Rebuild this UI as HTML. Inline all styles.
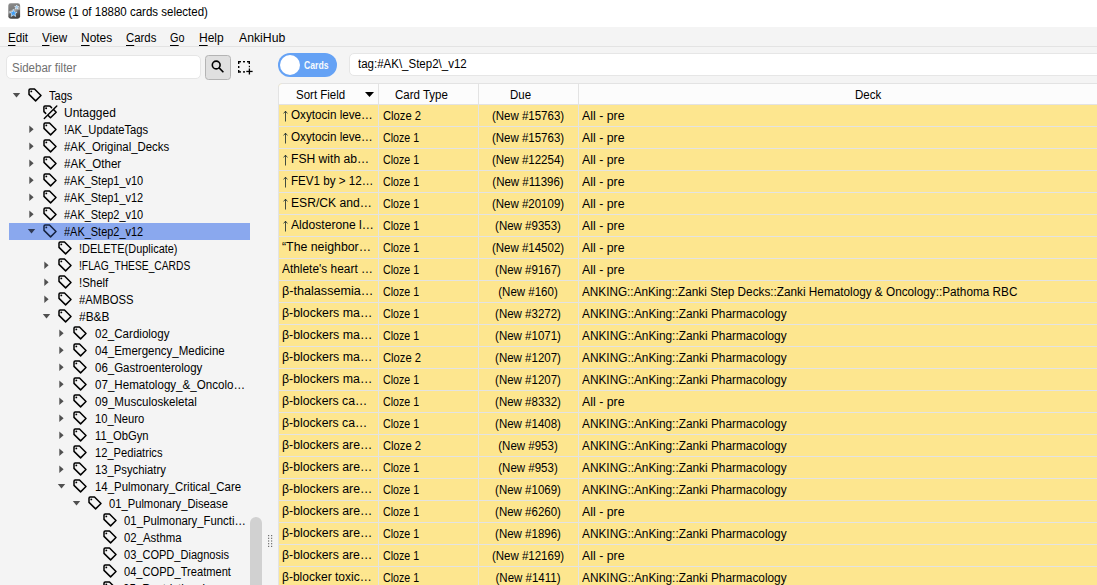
<!DOCTYPE html>
<html><head><meta charset="utf-8">
<style>
*{box-sizing:border-box;margin:0;padding:0}
html,body{width:1097px;height:585px;overflow:hidden;background:#f4f4f4;font-family:"Liberation Sans",sans-serif;font-size:12.5px;color:#000}
#title .t,#menu span,#filter span,#search span,.row span,.sr .txt,.hc{transform:scaleX(.92);transform-origin:0 50%}
.row span.c3{transform-origin:50% 50%}
.abs{position:absolute}
#title{left:0;top:0;width:1097px;height:27px;background:#fff}
#title .t{left:27px;top:4.5px;white-space:nowrap;color:#000}
#menu{left:0;top:27px;width:1097px;height:20px;background:#f4f4f4;border-bottom:1px solid #e3e3e3}
#menu span{position:absolute;top:3.8px;white-space:nowrap}
#menu u{text-decoration:none;border-bottom:1px solid #000;}
#filter{left:6px;top:55px;width:195px;height:24px;background:#fff;border:1px solid #e6e6e6;border-radius:5px}
#filter span{position:absolute;left:4.5px;top:5px;color:#707070}
#sbtn{left:205px;top:55px;width:26px;height:25px;background:#e0e0e0;border:1px solid #b4b4b4;border-radius:3.5px}
#toggle{left:278px;top:53px;width:59px;height:24px;background:#65a2f5;border-radius:12px}
#toggle .knob{left:2px;top:2px;width:20px;height:20px;background:#fff;border-radius:50%}
#toggle .lab{left:25.6px;top:7px;color:#fff;font-size:10px;font-weight:bold;transform:scaleX(.868);transform-origin:0 50%;opacity:.95}
#search{left:349px;top:53px;width:760px;height:23px;background:#fff;border:1px solid #e6e6e6;border-radius:5px}
#search span{position:absolute;left:8px;top:3.3px;white-space:nowrap}
#table{left:278px;top:83px;width:830px;height:520px;border:1px solid #e3e3e3;border-radius:4px 0 0 0;overflow:hidden;background:#fde68f}
#thead{left:0;top:0;width:830px;height:21px;background:#fcfcfc;border-bottom:1px solid #e3e3e3}
.hc{position:absolute;top:3.5px;white-space:nowrap}
.vline{position:absolute;top:0;width:1px;height:520px;background:#e3e3e3}
.row{position:absolute;left:0;width:830px;height:22px;border-bottom:1px solid #e3e3e3}
.row span{position:absolute;top:3.5px;white-space:nowrap}
.row span.c1{font-size:12px;top:2.8px}
.row svg{position:absolute;left:3px;top:5px}
.c1{left:3px}
.c1.ar{left:12px}
.c2{left:103px}
.c3{left:199px;width:100px;text-align:center}
.c4{left:304px}
#sidebar{left:0;top:87px;width:250px;height:500px}
.sr{position:absolute;left:0;width:250px;height:17px;white-space:nowrap}
.sr.sel{left:9px;width:241px;background:#8aa8ee}
.sr .txt{position:absolute;top:1.6px}
.sr svg{position:absolute;top:0px}
#scroll{left:250px;top:517px;width:12px;height:80px;background:#d1d1d1;border-radius:6px}
</style></head><body>
<div id="title" class="abs">
<svg class="abs" style="left:8px;top:3px" width="13" height="16" viewBox="0 0 13 16"><defs><linearGradient id="ig" x1="0" y1="0" x2="0.3" y2="1"><stop offset="0" stop-color="#8e8e8e"/><stop offset="0.55" stop-color="#777"/><stop offset="1" stop-color="#454545"/></linearGradient></defs><rect x="0.3" y="0.3" width="11.8" height="15.4" rx="2.4" fill="url(#ig)"/><path d="M0.3 8.5 Q6 5.5 12.1 3.2 V6.5 Q6 8 0.3 11Z" fill="#b4b4b4" opacity="0.7"/><polygon points="5.40,6.40 6.40,8.92 9.11,9.09 7.02,10.83 7.69,13.46 5.40,12.00 3.11,13.46 3.78,10.83 1.69,9.09 4.40,8.92" fill="#3f9df2" stroke="#d5eafb" stroke-width="0.7"/><polygon points="8.70,2.00 9.29,3.39 10.79,3.52 9.65,4.51 9.99,5.98 8.70,5.20 7.41,5.98 7.75,4.51 6.61,3.52 8.11,3.39" fill="#8cc6f6" stroke="#eef6fd" stroke-width="0.6"/></svg>
<span class="abs t">Browse (1 of 18880 cards selected)</span>
</div>
<div id="menu" class="abs">
<span style="left:8.30px;transform:scaleX(0.9333)"><u>E</u>dit</span>
<span style="left:42.10px;transform:scaleX(0.9331)"><u>V</u>iew</span>
<span style="left:81.00px;transform:scaleX(0.9556)"><u>N</u>otes</span>
<span style="left:126.20px;transform:scaleX(0.9115)"><u>C</u>ards</span>
<span style="left:170.40px;transform:scaleX(0.8696)"><u>G</u>o</span>
<span style="left:199.00px;transform:scaleX(0.9606)"><u>H</u>elp</span>
<span style="left:238.60px;transform:scaleX(0.9799)">AnkiHub</span>
</div>
<div id="filter" class="abs"><span>Sidebar filter</span></div>
<div id="sbtn" class="abs"><svg class="abs" style="left:5px;top:3px" width="16" height="16" viewBox="0 0 16 16"><circle cx="5.2" cy="6.0" r="3.9" fill="none" stroke="#000" stroke-width="1.6"/><line x1="8.1" y1="8.9" x2="12.4" y2="13.2" stroke="#000" stroke-width="1.6"/></svg></div>
<svg class="abs" style="left:236px;top:59px" width="18" height="18" viewBox="0 0 18 18"><g fill="#000"><rect x="2" y="2" width="3" height="1.4"/><rect x="2" y="2" width="1.4" height="3"/><rect x="7" y="2" width="2" height="1.4"/><rect x="11" y="2" width="3" height="1.4"/><rect x="12.6" y="2" width="1.4" height="3"/><rect x="2" y="7" width="1.4" height="2"/><rect x="12.8" y="6.8" width="1.2" height="1.4"/><rect x="2" y="11" width="1.4" height="2.6"/><rect x="2" y="12.2" width="3" height="1.4"/><rect x="7" y="12.2" width="2" height="1.4"/><rect x="12.75" y="9.5" width="1.3" height="6"/><rect x="10.3" y="11.8" width="6.3" height="1.3"/></g></svg>
<div id="toggle" class="abs"><div class="abs knob"></div><span class="abs lab">Cards</span></div>
<div id="search" class="abs"><span>tag:#AK\_Step2\_v12</span></div>
<div id="sidebar" class="abs">
<div class="sr" style="top:0px"><svg style="left:12px" width="9" height="17"><polygon points="0.8,6 8.2,6 4.5,10.5" fill="#505050"/></svg><svg style="left:27px" width="16" height="17" viewBox="0 0 16 17"><path d="M2 3.2 Q2 2 3.2 2 H7.5 L14 8.5 L8.6 13.9 L2 7.4 Z" fill="none" stroke="#000" stroke-width="1.5" stroke-linejoin="round"/><circle cx="4.3" cy="4.4" r="0.95" fill="#000"/></svg><span class="txt" style="left:49.20px;transform:scaleX(0.8826)">Tags</span></div>
<div class="sr" style="top:17px"><svg style="left:42px" width="16" height="17" viewBox="0 0 16 17"><path d="M3.7 9.4 L1.9 7.6 V3 Q1.9 1.9 3 1.9 H7.3 Q7.8 1.9 8.3 2.4 L9.6 3.7" fill="none" stroke="#000" stroke-width="1.5" stroke-linecap="round" stroke-linejoin="round"/><path d="M11.5 5.5 L14.2 8.3 L8.5 13.8 L5.9 11.2" fill="none" stroke="#000" stroke-width="1.5" stroke-linejoin="round"/><circle cx="4.1" cy="4.2" r="1" fill="#000"/><line x1="2.3" y1="14.5" x2="14.8" y2="2.1" stroke="#000" stroke-width="1.4" stroke-linecap="round"/></svg><span class="txt" style="left:64.40px;transform:scaleX(0.9555)">Untagged</span></div>
<div class="sr" style="top:34px"><svg style="left:27px" width="9" height="17"><polygon points="2.3,4.6 6.6,8.3 2.3,12" fill="#505050"/></svg><svg style="left:42px" width="16" height="17" viewBox="0 0 16 17"><path d="M2 3.2 Q2 2 3.2 2 H7.5 L14 8.5 L8.6 13.9 L2 7.4 Z" fill="none" stroke="#000" stroke-width="1.5" stroke-linejoin="round"/><circle cx="4.3" cy="4.4" r="0.95" fill="#000"/></svg><span class="txt" style="left:64.40px;transform:scaleX(0.8975)">!AK_UpdateTags</span></div>
<div class="sr" style="top:51px"><svg style="left:27px" width="9" height="17"><polygon points="2.3,4.6 6.6,8.3 2.3,12" fill="#505050"/></svg><svg style="left:42px" width="16" height="17" viewBox="0 0 16 17"><path d="M2 3.2 Q2 2 3.2 2 H7.5 L14 8.5 L8.6 13.9 L2 7.4 Z" fill="none" stroke="#000" stroke-width="1.5" stroke-linejoin="round"/><circle cx="4.3" cy="4.4" r="0.95" fill="#000"/></svg><span class="txt" style="left:64.40px;transform:scaleX(0.9121)">#AK_Original_Decks</span></div>
<div class="sr" style="top:68px"><svg style="left:27px" width="9" height="17"><polygon points="2.3,4.6 6.6,8.3 2.3,12" fill="#505050"/></svg><svg style="left:42px" width="16" height="17" viewBox="0 0 16 17"><path d="M2 3.2 Q2 2 3.2 2 H7.5 L14 8.5 L8.6 13.9 L2 7.4 Z" fill="none" stroke="#000" stroke-width="1.5" stroke-linejoin="round"/><circle cx="4.3" cy="4.4" r="0.95" fill="#000"/></svg><span class="txt" style="left:64.40px;transform:scaleX(0.9250)">#AK_Other</span></div>
<div class="sr" style="top:85px"><svg style="left:27px" width="9" height="17"><polygon points="2.3,4.6 6.6,8.3 2.3,12" fill="#505050"/></svg><svg style="left:42px" width="16" height="17" viewBox="0 0 16 17"><path d="M2 3.2 Q2 2 3.2 2 H7.5 L14 8.5 L8.6 13.9 L2 7.4 Z" fill="none" stroke="#000" stroke-width="1.5" stroke-linejoin="round"/><circle cx="4.3" cy="4.4" r="0.95" fill="#000"/></svg><span class="txt" style="left:64.40px;transform:scaleX(0.8766)">#AK_Step1_v10</span></div>
<div class="sr" style="top:102px"><svg style="left:27px" width="9" height="17"><polygon points="2.3,4.6 6.6,8.3 2.3,12" fill="#505050"/></svg><svg style="left:42px" width="16" height="17" viewBox="0 0 16 17"><path d="M2 3.2 Q2 2 3.2 2 H7.5 L14 8.5 L8.6 13.9 L2 7.4 Z" fill="none" stroke="#000" stroke-width="1.5" stroke-linejoin="round"/><circle cx="4.3" cy="4.4" r="0.95" fill="#000"/></svg><span class="txt" style="left:64.40px;transform:scaleX(0.8766)">#AK_Step1_v12</span></div>
<div class="sr" style="top:119px"><svg style="left:27px" width="9" height="17"><polygon points="2.3,4.6 6.6,8.3 2.3,12" fill="#505050"/></svg><svg style="left:42px" width="16" height="17" viewBox="0 0 16 17"><path d="M2 3.2 Q2 2 3.2 2 H7.5 L14 8.5 L8.6 13.9 L2 7.4 Z" fill="none" stroke="#000" stroke-width="1.5" stroke-linejoin="round"/><circle cx="4.3" cy="4.4" r="0.95" fill="#000"/></svg><span class="txt" style="left:64.40px;transform:scaleX(0.8766)">#AK_Step2_v10</span></div>
<div class="sr sel" style="top:136px"></div>
<div class="sr" style="top:136px"><svg style="left:27px" width="9" height="17"><polygon points="0.8,6 8.2,6 4.5,10.5" fill="#2f3a55"/></svg><svg style="left:42px" width="16" height="17" viewBox="0 0 16 17"><path d="M2 3.2 Q2 2 3.2 2 H7.5 L14 8.5 L8.6 13.9 L2 7.4 Z" fill="none" stroke="#15223f" stroke-width="1.5" stroke-linejoin="round"/><circle cx="4.3" cy="4.4" r="0.95" fill="#15223f"/></svg><span class="txt" style="left:64.40px;transform:scaleX(0.8766)">#AK_Step2_v12</span></div>
<div class="sr" style="top:153px"><svg style="left:57px" width="16" height="17" viewBox="0 0 16 17"><path d="M2 3.2 Q2 2 3.2 2 H7.5 L14 8.5 L8.6 13.9 L2 7.4 Z" fill="none" stroke="#000" stroke-width="1.5" stroke-linejoin="round"/><circle cx="4.3" cy="4.4" r="0.95" fill="#000"/></svg><span class="txt" style="left:79.10px;transform:scaleX(0.8753)">!DELETE(Duplicate)</span></div>
<div class="sr" style="top:170px"><svg style="left:42px" width="9" height="17"><polygon points="2.3,4.6 6.6,8.3 2.3,12" fill="#505050"/></svg><svg style="left:57px" width="16" height="17" viewBox="0 0 16 17"><path d="M2 3.2 Q2 2 3.2 2 H7.5 L14 8.5 L8.6 13.9 L2 7.4 Z" fill="none" stroke="#000" stroke-width="1.5" stroke-linejoin="round"/><circle cx="4.3" cy="4.4" r="0.95" fill="#000"/></svg><span class="txt" style="left:79.10px;transform:scaleX(0.8216)">!FLAG_THESE_CARDS</span></div>
<div class="sr" style="top:187px"><svg style="left:42px" width="9" height="17"><polygon points="2.3,4.6 6.6,8.3 2.3,12" fill="#505050"/></svg><svg style="left:57px" width="16" height="17" viewBox="0 0 16 17"><path d="M2 3.2 Q2 2 3.2 2 H7.5 L14 8.5 L8.6 13.9 L2 7.4 Z" fill="none" stroke="#000" stroke-width="1.5" stroke-linejoin="round"/><circle cx="4.3" cy="4.4" r="0.95" fill="#000"/></svg><span class="txt" style="left:79.10px;transform:scaleX(0.9160)">!Shelf</span></div>
<div class="sr" style="top:204px"><svg style="left:42px" width="9" height="17"><polygon points="2.3,4.6 6.6,8.3 2.3,12" fill="#505050"/></svg><svg style="left:57px" width="16" height="17" viewBox="0 0 16 17"><path d="M2 3.2 Q2 2 3.2 2 H7.5 L14 8.5 L8.6 13.9 L2 7.4 Z" fill="none" stroke="#000" stroke-width="1.5" stroke-linejoin="round"/><circle cx="4.3" cy="4.4" r="0.95" fill="#000"/></svg><span class="txt" style="left:79.10px;transform:scaleX(0.9018)">#AMBOSS</span></div>
<div class="sr" style="top:221px"><svg style="left:42px" width="9" height="17"><polygon points="0.8,6 8.2,6 4.5,10.5" fill="#505050"/></svg><svg style="left:57px" width="16" height="17" viewBox="0 0 16 17"><path d="M2 3.2 Q2 2 3.2 2 H7.5 L14 8.5 L8.6 13.9 L2 7.4 Z" fill="none" stroke="#000" stroke-width="1.5" stroke-linejoin="round"/><circle cx="4.3" cy="4.4" r="0.95" fill="#000"/></svg><span class="txt" style="left:79.10px;transform:scaleX(0.9542)">#B&amp;B</span></div>
<div class="sr" style="top:238px"><svg style="left:57px" width="9" height="17"><polygon points="2.3,4.6 6.6,8.3 2.3,12" fill="#505050"/></svg><svg style="left:72px" width="16" height="17" viewBox="0 0 16 17"><path d="M2 3.2 Q2 2 3.2 2 H7.5 L14 8.5 L8.6 13.9 L2 7.4 Z" fill="none" stroke="#000" stroke-width="1.5" stroke-linejoin="round"/><circle cx="4.3" cy="4.4" r="0.95" fill="#000"/></svg><span class="txt" style="left:94.60px;transform:scaleX(0.9242)">02_Cardiology</span></div>
<div class="sr" style="top:255px"><svg style="left:57px" width="9" height="17"><polygon points="2.3,4.6 6.6,8.3 2.3,12" fill="#505050"/></svg><svg style="left:72px" width="16" height="17" viewBox="0 0 16 17"><path d="M2 3.2 Q2 2 3.2 2 H7.5 L14 8.5 L8.6 13.9 L2 7.4 Z" fill="none" stroke="#000" stroke-width="1.5" stroke-linejoin="round"/><circle cx="4.3" cy="4.4" r="0.95" fill="#000"/></svg><span class="txt" style="left:94.60px;transform:scaleX(0.9195)">04_Emergency_Medicine</span></div>
<div class="sr" style="top:272px"><svg style="left:57px" width="9" height="17"><polygon points="2.3,4.6 6.6,8.3 2.3,12" fill="#505050"/></svg><svg style="left:72px" width="16" height="17" viewBox="0 0 16 17"><path d="M2 3.2 Q2 2 3.2 2 H7.5 L14 8.5 L8.6 13.9 L2 7.4 Z" fill="none" stroke="#000" stroke-width="1.5" stroke-linejoin="round"/><circle cx="4.3" cy="4.4" r="0.95" fill="#000"/></svg><span class="txt" style="left:94.60px;transform:scaleX(0.9192)">06_Gastroenterology</span></div>
<div class="sr" style="top:289px"><svg style="left:57px" width="9" height="17"><polygon points="2.3,4.6 6.6,8.3 2.3,12" fill="#505050"/></svg><svg style="left:72px" width="16" height="17" viewBox="0 0 16 17"><path d="M2 3.2 Q2 2 3.2 2 H7.5 L14 8.5 L8.6 13.9 L2 7.4 Z" fill="none" stroke="#000" stroke-width="1.5" stroke-linejoin="round"/><circle cx="4.3" cy="4.4" r="0.95" fill="#000"/></svg><span class="txt" style="left:94.60px;transform:scaleX(0.9265)">07_Hematology_&amp;_Oncolo…</span></div>
<div class="sr" style="top:306px"><svg style="left:57px" width="9" height="17"><polygon points="2.3,4.6 6.6,8.3 2.3,12" fill="#505050"/></svg><svg style="left:72px" width="16" height="17" viewBox="0 0 16 17"><path d="M2 3.2 Q2 2 3.2 2 H7.5 L14 8.5 L8.6 13.9 L2 7.4 Z" fill="none" stroke="#000" stroke-width="1.5" stroke-linejoin="round"/><circle cx="4.3" cy="4.4" r="0.95" fill="#000"/></svg><span class="txt" style="left:94.60px;transform:scaleX(0.9272)">09_Musculoskeletal</span></div>
<div class="sr" style="top:323px"><svg style="left:57px" width="9" height="17"><polygon points="2.3,4.6 6.6,8.3 2.3,12" fill="#505050"/></svg><svg style="left:72px" width="16" height="17" viewBox="0 0 16 17"><path d="M2 3.2 Q2 2 3.2 2 H7.5 L14 8.5 L8.6 13.9 L2 7.4 Z" fill="none" stroke="#000" stroke-width="1.5" stroke-linejoin="round"/><circle cx="4.3" cy="4.4" r="0.95" fill="#000"/></svg><span class="txt" style="left:94.60px;transform:scaleX(0.8980)">10_Neuro</span></div>
<div class="sr" style="top:340px"><svg style="left:57px" width="9" height="17"><polygon points="2.3,4.6 6.6,8.3 2.3,12" fill="#505050"/></svg><svg style="left:72px" width="16" height="17" viewBox="0 0 16 17"><path d="M2 3.2 Q2 2 3.2 2 H7.5 L14 8.5 L8.6 13.9 L2 7.4 Z" fill="none" stroke="#000" stroke-width="1.5" stroke-linejoin="round"/><circle cx="4.3" cy="4.4" r="0.95" fill="#000"/></svg><span class="txt" style="left:94.60px;transform:scaleX(0.8988)">11_ObGyn</span></div>
<div class="sr" style="top:357px"><svg style="left:57px" width="9" height="17"><polygon points="2.3,4.6 6.6,8.3 2.3,12" fill="#505050"/></svg><svg style="left:72px" width="16" height="17" viewBox="0 0 16 17"><path d="M2 3.2 Q2 2 3.2 2 H7.5 L14 8.5 L8.6 13.9 L2 7.4 Z" fill="none" stroke="#000" stroke-width="1.5" stroke-linejoin="round"/><circle cx="4.3" cy="4.4" r="0.95" fill="#000"/></svg><span class="txt" style="left:94.60px;transform:scaleX(0.8912)">12_Pediatrics</span></div>
<div class="sr" style="top:374px"><svg style="left:57px" width="9" height="17"><polygon points="2.3,4.6 6.6,8.3 2.3,12" fill="#505050"/></svg><svg style="left:72px" width="16" height="17" viewBox="0 0 16 17"><path d="M2 3.2 Q2 2 3.2 2 H7.5 L14 8.5 L8.6 13.9 L2 7.4 Z" fill="none" stroke="#000" stroke-width="1.5" stroke-linejoin="round"/><circle cx="4.3" cy="4.4" r="0.95" fill="#000"/></svg><span class="txt" style="left:94.60px;transform:scaleX(0.9018)">13_Psychiatry</span></div>
<div class="sr" style="top:391px"><svg style="left:57px" width="9" height="17"><polygon points="0.8,6 8.2,6 4.5,10.5" fill="#505050"/></svg><svg style="left:72px" width="16" height="17" viewBox="0 0 16 17"><path d="M2 3.2 Q2 2 3.2 2 H7.5 L14 8.5 L8.6 13.9 L2 7.4 Z" fill="none" stroke="#000" stroke-width="1.5" stroke-linejoin="round"/><circle cx="4.3" cy="4.4" r="0.95" fill="#000"/></svg><span class="txt" style="left:94.60px;transform:scaleX(0.9143)">14_Pulmonary_Critical_Care</span></div>
<div class="sr" style="top:408px"><svg style="left:72px" width="9" height="17"><polygon points="0.8,6 8.2,6 4.5,10.5" fill="#505050"/></svg><svg style="left:87px" width="16" height="17" viewBox="0 0 16 17"><path d="M2 3.2 Q2 2 3.2 2 H7.5 L14 8.5 L8.6 13.9 L2 7.4 Z" fill="none" stroke="#000" stroke-width="1.5" stroke-linejoin="round"/><circle cx="4.3" cy="4.4" r="0.95" fill="#000"/></svg><span class="txt" style="left:109.40px;transform:scaleX(0.8959)">01_Pulmonary_Disease</span></div>
<div class="sr" style="top:425px"><svg style="left:102px" width="16" height="17" viewBox="0 0 16 17"><path d="M2 3.2 Q2 2 3.2 2 H7.5 L14 8.5 L8.6 13.9 L2 7.4 Z" fill="none" stroke="#000" stroke-width="1.5" stroke-linejoin="round"/><circle cx="4.3" cy="4.4" r="0.95" fill="#000"/></svg><span class="txt" style="left:124.20px;transform:scaleX(0.9083)">01_Pulmonary_Functi…</span></div>
<div class="sr" style="top:442px"><svg style="left:102px" width="16" height="17" viewBox="0 0 16 17"><path d="M2 3.2 Q2 2 3.2 2 H7.5 L14 8.5 L8.6 13.9 L2 7.4 Z" fill="none" stroke="#000" stroke-width="1.5" stroke-linejoin="round"/><circle cx="4.3" cy="4.4" r="0.95" fill="#000"/></svg><span class="txt" style="left:124.20px;transform:scaleX(0.9109)">02_Asthma</span></div>
<div class="sr" style="top:459px"><svg style="left:102px" width="16" height="17" viewBox="0 0 16 17"><path d="M2 3.2 Q2 2 3.2 2 H7.5 L14 8.5 L8.6 13.9 L2 7.4 Z" fill="none" stroke="#000" stroke-width="1.5" stroke-linejoin="round"/><circle cx="4.3" cy="4.4" r="0.95" fill="#000"/></svg><span class="txt" style="left:124.20px;transform:scaleX(0.8837)">03_COPD_Diagnosis</span></div>
<div class="sr" style="top:476px"><svg style="left:102px" width="16" height="17" viewBox="0 0 16 17"><path d="M2 3.2 Q2 2 3.2 2 H7.5 L14 8.5 L8.6 13.9 L2 7.4 Z" fill="none" stroke="#000" stroke-width="1.5" stroke-linejoin="round"/><circle cx="4.3" cy="4.4" r="0.95" fill="#000"/></svg><span class="txt" style="left:124.20px;transform:scaleX(0.8877)">04_COPD_Treatment</span></div>
<div class="sr" style="top:493px"><svg style="left:102px" width="16" height="17" viewBox="0 0 16 17"><path d="M2 3.2 Q2 2 3.2 2 H7.5 L14 8.5 L8.6 13.9 L2 7.4 Z" fill="none" stroke="#000" stroke-width="1.5" stroke-linejoin="round"/><circle cx="4.3" cy="4.4" r="0.95" fill="#000"/></svg><span class="txt" style="left:123.3px">05_Restrictive_Lung</span></div>
</div>
<div id="scroll" class="abs"></div>
<svg class="abs" style="left:267px;top:534px" width="6" height="14"><g fill="#6e6e6e"><rect x="1" y="1" width="1.2" height="1.2"/><rect x="4" y="1" width="1.2" height="1.2"/><rect x="1" y="3.7" width="1.2" height="1.2"/><rect x="4" y="3.7" width="1.2" height="1.2"/><rect x="1" y="6.4" width="1.2" height="1.2"/><rect x="4" y="6.4" width="1.2" height="1.2"/><rect x="1" y="9.1" width="1.2" height="1.2"/><rect x="4" y="9.1" width="1.2" height="1.2"/><rect x="1" y="11.8" width="1.2" height="1.2"/><rect x="4" y="11.8" width="1.2" height="1.2"/></g></svg>
<div id="table" class="abs">
<div id="thead" class="abs">
<span class="hc" style="left:17px">Sort Field</span>
<svg class="abs" style="left:86px;top:8px" width="9" height="5"><polygon points="0,0 9,0 4.5,5" fill="#000"/></svg>
<span class="hc" style="left:116px">Card Type</span>
<span class="hc" style="left:231px">Due</span>
<span class="hc" style="left:576px">Deck</span>
</div>
<div class="row" style="top:21px"><svg width="6" height="12" viewBox="0 0 6 12" style="left:3.8px"><path d="M2.5 1 V11.5 M0.6 3.4 L2.5 1.2 L4.4 3.4" fill="none" stroke="#203030" stroke-width="0.85"/></svg><span class="c1" style="left:11.70px;transform:scaleX(0.9735)">Oxytocin leve…</span><span class="c2" style="left:103.60px;transform:scaleX(0.8988)">Cloze 2</span><span class="c3">(New #15763)</span><span class="c4" style="left:303.10px;transform:scaleX(0.9869)">All - pre</span></div>
<div class="row" style="top:43px"><svg width="6" height="12" viewBox="0 0 6 12" style="left:3.8px"><path d="M2.5 1 V11.5 M0.6 3.4 L2.5 1.2 L4.4 3.4" fill="none" stroke="#203030" stroke-width="0.85"/></svg><span class="c1" style="left:11.70px;transform:scaleX(0.9735)">Oxytocin leve…</span><span class="c2" style="left:103.80px;transform:scaleX(0.8517)">Cloze 1</span><span class="c3">(New #15763)</span><span class="c4" style="left:303.10px;transform:scaleX(0.9869)">All - pre</span></div>
<div class="row" style="top:65px"><svg width="6" height="12" viewBox="0 0 6 12" style="left:3.8px"><path d="M2.5 1 V11.5 M0.6 3.4 L2.5 1.2 L4.4 3.4" fill="none" stroke="#203030" stroke-width="0.85"/></svg><span class="c1" style="left:11.70px;transform:scaleX(1.0097)">FSH with ab…</span><span class="c2" style="left:103.80px;transform:scaleX(0.8517)">Cloze 1</span><span class="c3">(New #12254)</span><span class="c4" style="left:303.10px;transform:scaleX(0.9869)">All - pre</span></div>
<div class="row" style="top:87px"><svg width="6" height="12" viewBox="0 0 6 12" style="left:3.8px"><path d="M2.5 1 V11.5 M0.6 3.4 L2.5 1.2 L4.4 3.4" fill="none" stroke="#203030" stroke-width="0.85"/></svg><span class="c1" style="left:11.70px;transform:scaleX(0.9689)">FEV1 by &gt; 12…</span><span class="c2" style="left:103.80px;transform:scaleX(0.8517)">Cloze 1</span><span class="c3">(New #11396)</span><span class="c4" style="left:303.10px;transform:scaleX(0.9869)">All - pre</span></div>
<div class="row" style="top:109px"><svg width="6" height="12" viewBox="0 0 6 12" style="left:3.8px"><path d="M2.5 1 V11.5 M0.6 3.4 L2.5 1.2 L4.4 3.4" fill="none" stroke="#203030" stroke-width="0.85"/></svg><span class="c1" style="left:11.70px;transform:scaleX(1.0109)">ESR/CK and…</span><span class="c2" style="left:103.80px;transform:scaleX(0.8517)">Cloze 1</span><span class="c3">(New #20109)</span><span class="c4" style="left:303.10px;transform:scaleX(0.9869)">All - pre</span></div>
<div class="row" style="top:131px"><svg width="6" height="12" viewBox="0 0 6 12" style="left:3.8px"><path d="M2.5 1 V11.5 M0.6 3.4 L2.5 1.2 L4.4 3.4" fill="none" stroke="#203030" stroke-width="0.85"/></svg><span class="c1" style="left:11.70px;transform:scaleX(1.0092)">Aldosterone l…</span><span class="c2" style="left:103.80px;transform:scaleX(0.8517)">Cloze 1</span><span class="c3">(New #9353)</span><span class="c4" style="left:303.10px;transform:scaleX(0.9869)">All - pre</span></div>
<div class="row" style="top:153px"><span class="c1" style="left:3.20px;transform:scaleX(1.0264)">“The neighbor…</span><span class="c2" style="left:103.80px;transform:scaleX(0.8517)">Cloze 1</span><span class="c3">(New #14502)</span><span class="c4" style="left:303.10px;transform:scaleX(0.9869)">All - pre</span></div>
<div class="row" style="top:175px"><span class="c1" style="left:3.20px;transform:scaleX(0.9916)">Athlete's heart …</span><span class="c2" style="left:103.80px;transform:scaleX(0.8517)">Cloze 1</span><span class="c3">(New #9167)</span><span class="c4" style="left:303.10px;transform:scaleX(0.9869)">All - pre</span></div>
<div class="row" style="top:197px"><span class="c1" style="left:3.20px;transform:scaleX(1.0514)">β-thalassemia…</span><span class="c2" style="left:103.80px;transform:scaleX(0.8517)">Cloze 1</span><span class="c3">(New #160)</span><span class="c4" style="left:303.00px;transform:scaleX(0.9410)">ANKING::AnKing::Zanki Step Decks::Zanki Hematology &amp; Oncology::Pathoma RBC</span></div>
<div class="row" style="top:219px"><span class="c1" style="left:3.20px;transform:scaleX(1.0310)">β-blockers ma…</span><span class="c2" style="left:103.80px;transform:scaleX(0.8517)">Cloze 1</span><span class="c3">(New #3272)</span><span class="c4" style="left:303.00px;transform:scaleX(0.9469)">ANKING::AnKing::Zanki Pharmacology</span></div>
<div class="row" style="top:241px"><span class="c1" style="left:3.20px;transform:scaleX(1.0310)">β-blockers ma…</span><span class="c2" style="left:103.80px;transform:scaleX(0.8517)">Cloze 1</span><span class="c3">(New #1071)</span><span class="c4" style="left:303.00px;transform:scaleX(0.9469)">ANKING::AnKing::Zanki Pharmacology</span></div>
<div class="row" style="top:263px"><span class="c1" style="left:3.20px;transform:scaleX(1.0310)">β-blockers ma…</span><span class="c2" style="left:103.60px;transform:scaleX(0.8988)">Cloze 2</span><span class="c3">(New #1207)</span><span class="c4" style="left:303.00px;transform:scaleX(0.9469)">ANKING::AnKing::Zanki Pharmacology</span></div>
<div class="row" style="top:285px"><span class="c1" style="left:3.20px;transform:scaleX(1.0310)">β-blockers ma…</span><span class="c2" style="left:103.80px;transform:scaleX(0.8517)">Cloze 1</span><span class="c3">(New #1207)</span><span class="c4" style="left:303.00px;transform:scaleX(0.9469)">ANKING::AnKing::Zanki Pharmacology</span></div>
<div class="row" style="top:307px"><span class="c1" style="left:3.20px;transform:scaleX(1.0192)">β-blockers ca…</span><span class="c2" style="left:103.80px;transform:scaleX(0.8517)">Cloze 1</span><span class="c3">(New #8332)</span><span class="c4" style="left:303.10px;transform:scaleX(0.9869)">All - pre</span></div>
<div class="row" style="top:329px"><span class="c1" style="left:3.20px;transform:scaleX(1.0192)">β-blockers ca…</span><span class="c2" style="left:103.80px;transform:scaleX(0.8517)">Cloze 1</span><span class="c3">(New #1408)</span><span class="c4" style="left:303.00px;transform:scaleX(0.9469)">ANKING::AnKing::Zanki Pharmacology</span></div>
<div class="row" style="top:351px"><span class="c1" style="left:3.20px;transform:scaleX(1.0231)">β-blockers are…</span><span class="c2" style="left:103.60px;transform:scaleX(0.8988)">Cloze 2</span><span class="c3">(New #953)</span><span class="c4" style="left:303.00px;transform:scaleX(0.9469)">ANKING::AnKing::Zanki Pharmacology</span></div>
<div class="row" style="top:373px"><span class="c1" style="left:3.20px;transform:scaleX(1.0231)">β-blockers are…</span><span class="c2" style="left:103.80px;transform:scaleX(0.8517)">Cloze 1</span><span class="c3">(New #953)</span><span class="c4" style="left:303.00px;transform:scaleX(0.9469)">ANKING::AnKing::Zanki Pharmacology</span></div>
<div class="row" style="top:395px"><span class="c1" style="left:3.20px;transform:scaleX(1.0231)">β-blockers are…</span><span class="c2" style="left:103.80px;transform:scaleX(0.8517)">Cloze 1</span><span class="c3">(New #1069)</span><span class="c4" style="left:303.00px;transform:scaleX(0.9469)">ANKING::AnKing::Zanki Pharmacology</span></div>
<div class="row" style="top:417px"><span class="c1" style="left:3.20px;transform:scaleX(1.0231)">β-blockers are…</span><span class="c2" style="left:103.80px;transform:scaleX(0.8517)">Cloze 1</span><span class="c3">(New #6260)</span><span class="c4" style="left:303.10px;transform:scaleX(0.9869)">All - pre</span></div>
<div class="row" style="top:439px"><span class="c1" style="left:3.20px;transform:scaleX(1.0231)">β-blockers are…</span><span class="c2" style="left:103.80px;transform:scaleX(0.8517)">Cloze 1</span><span class="c3">(New #1896)</span><span class="c4" style="left:303.00px;transform:scaleX(0.9469)">ANKING::AnKing::Zanki Pharmacology</span></div>
<div class="row" style="top:461px"><span class="c1" style="left:3.20px;transform:scaleX(1.0220)">β-blockers are…</span><span class="c2" style="left:103.80px;transform:scaleX(0.8517)">Cloze 1</span><span class="c3">(New #12169)</span><span class="c4" style="left:303.10px;transform:scaleX(0.9869)">All - pre</span></div>
<div class="row" style="top:483px"><span class="c1" style="left:3.20px;transform:scaleX(1.0012)">β-blocker toxic…</span><span class="c2" style="left:103.80px;transform:scaleX(0.8517)">Cloze 1</span><span class="c3">(New #1411)</span><span class="c4" style="left:303.00px;transform:scaleX(0.9469)">ANKING::AnKing::Zanki Pharmacology</span></div>
<div class="vline" style="left:99px"></div>
<div class="vline" style="left:199px"></div>
<div class="vline" style="left:299px"></div>
</div>
</body></html>
